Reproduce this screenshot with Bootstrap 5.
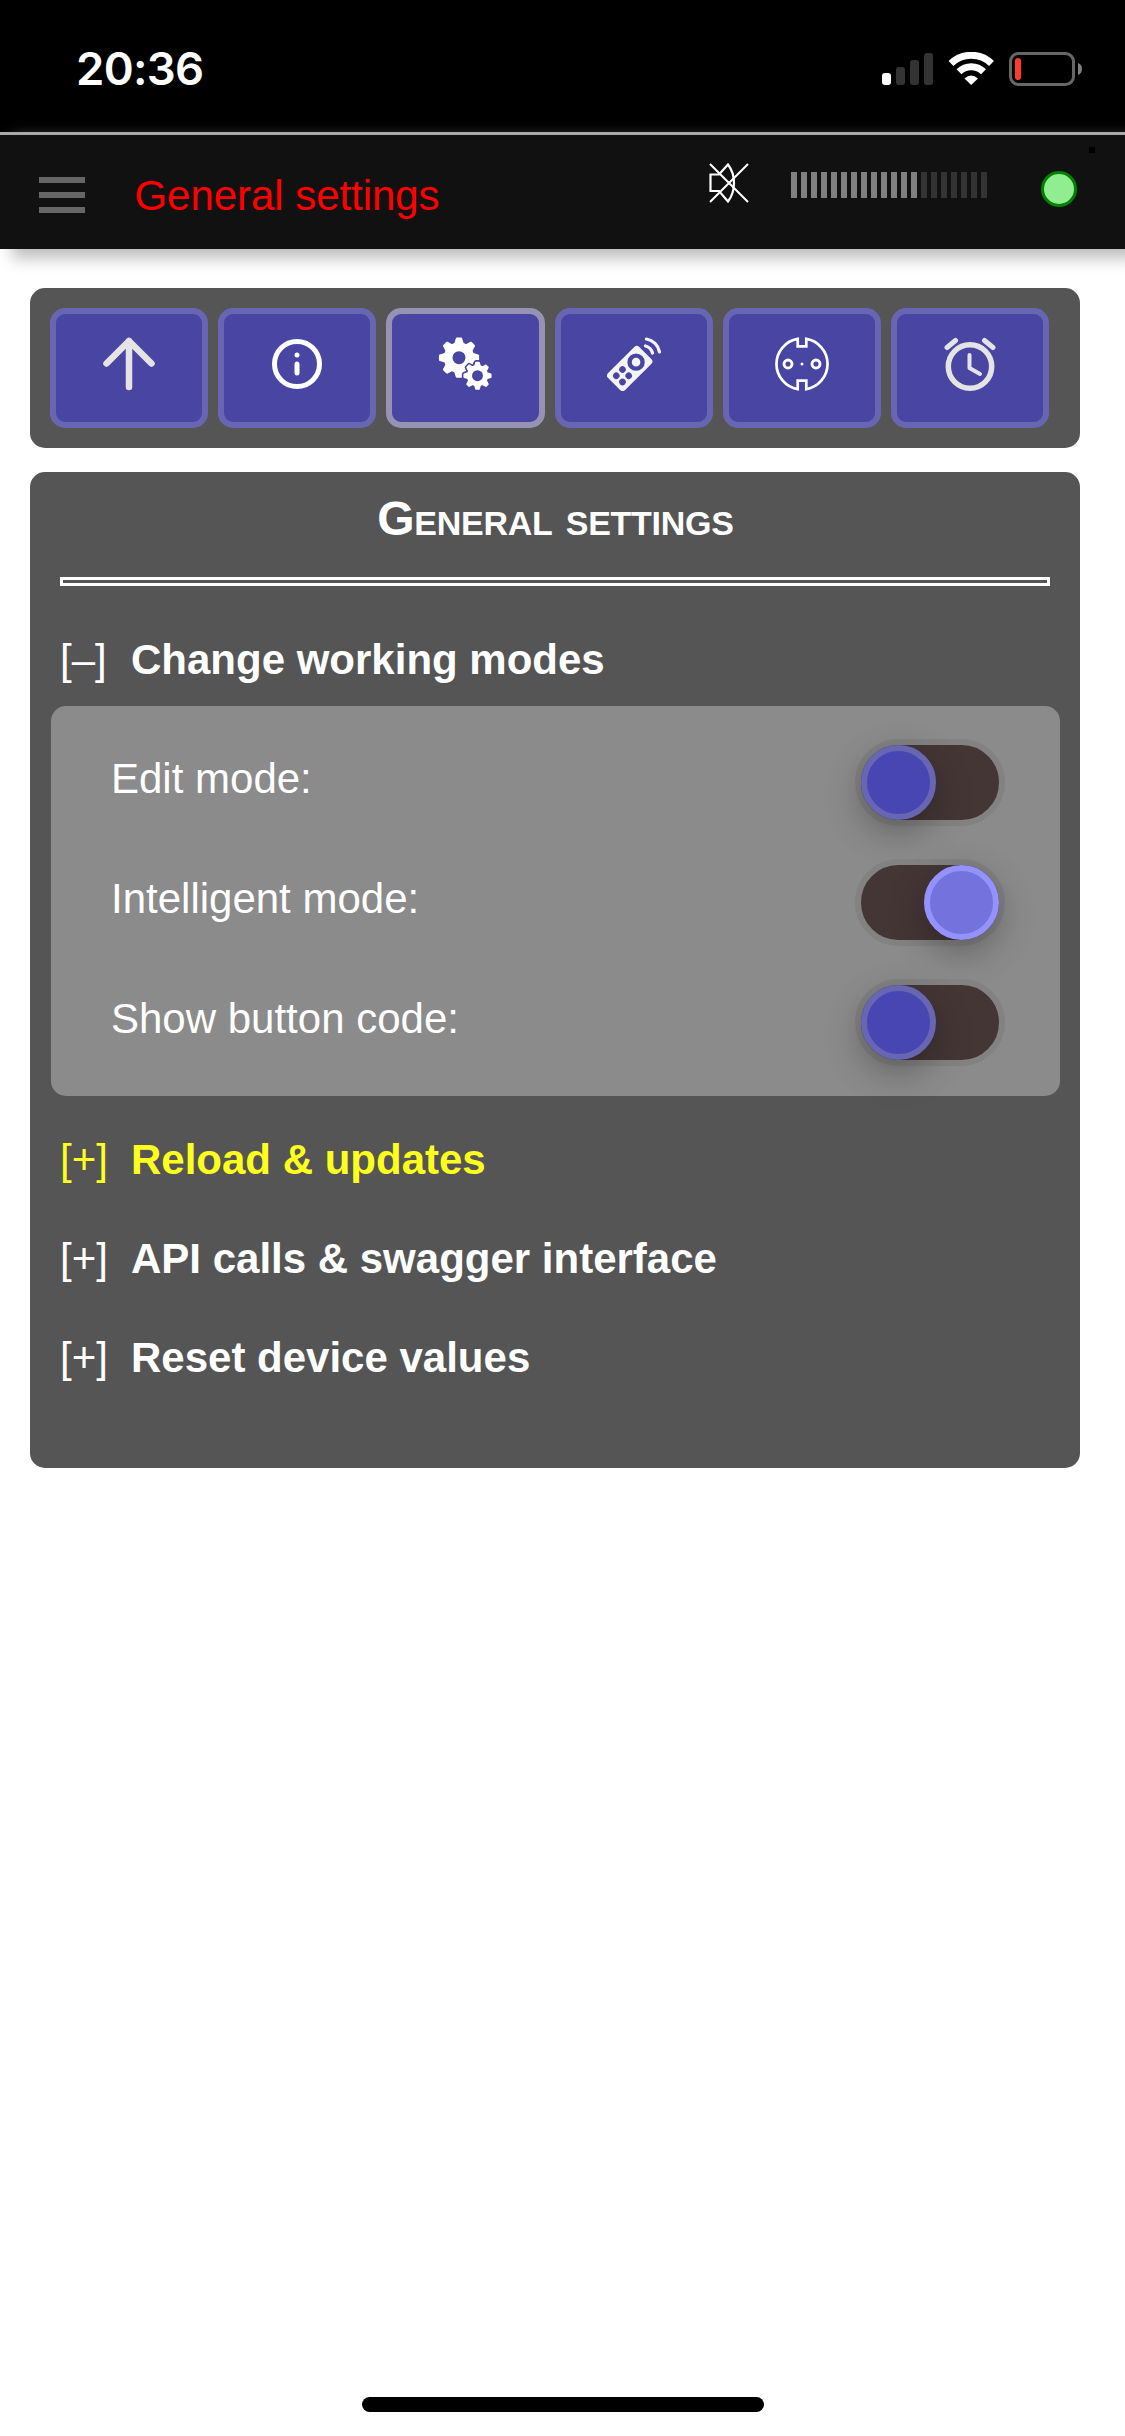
<!DOCTYPE html>
<html lang="en">
<head>
<meta charset="utf-8">
<meta name="viewport" content="width=device-width, initial-scale=1">
<title>General settings</title>
<link href="https://cdn.jsdelivr.net/npm/bootstrap@5.3.0/dist/css/bootstrap.min.css" rel="stylesheet">
<style>
body{width:1125px;height:2436px;font-family:"Liberation Sans",Arial,sans-serif;font-size:42px;line-height:48px;overflow:hidden}
svg{display:block;flex:none}
.status-bar{height:132px;padding:0 43px 0 76px}
.clock{font-family:Inter,sans-serif;font-weight:600;font-size:45.5px;letter-spacing:-.7px;line-height:56px;margin-top:6px}
.status-icons{margin-top:6px}
.app-bar{height:117px;background:#111;border-top:3px solid #a9a9a9;box-shadow:12px 9px 15px #bbb;padding:0 48px 0 38.500px}
.burger{width:46px;padding-top:6px;gap:9px}
.burger i{display:block;height:6px;background:#666}
.app-title{color:red;margin-left:50px;padding-top:7px;letter-spacing:-.05px}
.sound{margin-top:-18px}
.ticks{gap:4px;margin:3px 54px 0 42px}
.tick{width:6px;height:26px;background:#333}
.tick.lit{background:gray}
.led{width:36px;height:36px;border:3px solid green;background:#90ee90;margin-top:11px}
.led-dot{position:absolute;right:30px;top:12px;width:6px;height:6px;background:#000}
.panel{background:#555;border-radius:15px;margin-left:30px;width:1050px}
.tools{height:160px;padding:20px 31px 20px 20px;gap:10px;margin-top:39px}
.tool{background:#4846a2;border:6px solid #6866b2;border-radius:15px;padding:0 0 8px;flex:1 1 0;min-width:0}
.tool.active{background:#4846a2;border-color:#9592b2}
.main{height:996px;padding:0 20px 0 21px;margin-top:24px}
.heading{font-variant:small-caps;font-weight:700;font-size:48px;letter-spacing:-.25px;line-height:56px;margin:19px 0 0}
.rule{height:9px;border:3px solid #fff;margin:30px 10px 0 9px}
.fold{height:48px;margin:51px 0 0 9px}
.fold span{width:71px}
.fold.opened{margin-top:50px}
.fold.pending{margin-top:40px;color:#ffff1e}
.modes{background:#8b8b8b;border-radius:15px;height:390px;padding:16px 55px 14px 60px;margin-top:22px}
.mode{height:120px}
.mode label{padding-bottom:6px}
.switch{width:150px;height:87px;border:6px solid #828282;border-radius:44px;background:#453636}
.knob{width:75px;height:75px;border:6px solid #6866b2;background:#4846b2;border-radius:50%;box-shadow:0 12px 36px rgba(0,0,0,.3)}
.on .knob{background:#7473dd;border-color:#9492ff}
.home{width:402px;height:15px;border-radius:8px;background:#000;margin-bottom:24px}
</style>
</head>
<body class="d-flex flex-column bg-white m-0">
<div class="status-bar bg-black text-white d-flex align-items-center justify-content-between">
  <div class="clock">20:36</div>
  <div class="status-icons d-flex align-items-center">
    <svg width="200" height="34" viewBox="882 52 200 34">
      <rect x="882" y="73" width="9" height="12" rx="3" fill="#fff"/>
      <g fill="#333"><rect x="896" y="67" width="9" height="18" rx="3"/><rect x="910" y="60" width="9" height="25" rx="3"/><rect x="924" y="53" width="9" height="32" rx="3"/></g>
      <g fill="none" stroke="#fff" stroke-width="7"><path d="M951 63.500A29 29 0 0 1 991.500 63.500"/><path d="M959 71.700A17.500 17.500 0 0 1 983.500 71.700"/></g>
      <path d="M964.500 78.500Q971 72.500 978 78.500L971.200 85Z" fill="#fff"/>
      <rect x="1010.500" y="53.500" width="63" height="31" rx="8" fill="none" stroke="#666" stroke-width="3"/>
      <rect x="1015" y="58" width="6" height="22" rx="3" fill="#ff3b30"/>
      <path d="M1078 63q4 1.500 4 6t-4 6z" fill="#808080"/>
    </svg>
  </div>
</div>
<header class="app-bar d-flex align-items-center position-relative">
  <div class="burger d-flex flex-column"><i></i><i></i><i></i></div>
  <div class="app-title">General settings</div>
  <div class="sound d-flex align-items-center ms-auto">
    <svg width="40" height="40" viewBox="0 0 40 40" fill="none" stroke="#fff" stroke-width="2.200"><path d="M1.500 11.500H10L19 1.500C27 12 27 28 19 38.500L10 28H1.500Z"/><path d="M1 1L39 39M39 1L1 39" stroke-width="2"/></svg>
    <div class="ticks d-flex">
      <i class="tick lit"></i><i class="tick lit"></i><i class="tick lit"></i><i class="tick lit"></i><i class="tick lit"></i><i class="tick lit"></i><i class="tick lit"></i><i class="tick lit"></i><i class="tick lit"></i><i class="tick lit"></i><i class="tick lit"></i><i class="tick lit"></i><i class="tick lit"></i><i class="tick"></i><i class="tick"></i><i class="tick"></i><i class="tick"></i><i class="tick"></i><i class="tick"></i><i class="tick"></i>
    </div>
    <div class="led rounded-circle"></div>
  </div>
  <span class="led-dot"></span>
</header>
<nav class="panel tools d-flex">
  <button class="tool btn d-flex align-items-center justify-content-center" aria-label="Up"><svg width="54" height="54" viewBox="0 0 54 54" fill="none" stroke="#e4e4e4" stroke-width="6.500" stroke-linecap="round" stroke-linejoin="round"><path d="M27 50V4M4.500 26.500L27 4L49.500 26.500"/></svg></button>
  <button class="tool btn d-flex align-items-center justify-content-center" aria-label="Info"><svg width="54" height="54" viewBox="0 0 54 54" fill="none" stroke="#fff" stroke-width="5"><circle cx="27" cy="27" r="22.500"/><path d="M27 27V36" stroke-linecap="round"/><circle cx="27" cy="18" r="2.500" fill="#fff" stroke="none"/></svg></button>
  <button class="tool active btn d-flex align-items-center justify-content-center" aria-label="Settings"><svg width="54" height="54" viewBox="0 0 54 54"><defs><g id="gear"><circle r="15.200"/><g id="cog4"><g id="cog2"><path id="cog1" d="M-4.800-14L-3.200-19.300Q-3-20.100-2-20.100H2Q3-20.100 3.200-19.300L4.800-14Z"/><use href="#cog1" transform="rotate(180)"/></g><use href="#cog2" transform="rotate(90)"/></g><use href="#cog4" transform="rotate(45)"/></g></defs>
    <use href="#gear" fill="#fff" transform="translate(21 20.700)"/><circle cx="21" cy="20.700" r="6.500" fill="#4846a2"/>
    <g transform="translate(39.500 38.700) scale(.7)"><use href="#gear" fill="#4846a2" stroke="#4846a2" stroke-width="4.500"/><use href="#gear" fill="#fff"/><circle r="7.800" fill="#4846a2"/></g></svg></button>
  <button class="tool btn d-flex align-items-center justify-content-center" aria-label="Remote"><svg width="54" height="54" viewBox="0 0 54 54"><g transform="translate(22.700 31.500) rotate(45)"><rect x="-12" y="-22" width="24" height="44" rx="3.500" fill="#f4f4f4"/><g fill="#4846a2"><circle cy="-9" r="8.700"/><circle cx="-4.400" cy="5.800" r="3.300"/><circle cx="4.400" cy="5.800" r="3.300"/><circle cx="-4.400" cy="14.600" r="3.300"/><circle cx="4.400" cy="14.600" r="3.300"/></g><circle cy="-9" r="4.300" fill="#f4f4f4"/></g><g fill="none" stroke="#f4f4f4" stroke-width="3.200" stroke-linecap="round"><path d="M38.500 9A10 10 0 0 1 45.500 16M39.500 2A16 16 0 0 1 52.500 15"/></g></svg></button>
  <button class="tool btn d-flex align-items-center justify-content-center" aria-label="Socket"><svg width="54" height="54" viewBox="0 0 54 54" fill="none" stroke="#fff" stroke-width="2.700"><path d="M22.700 1.900V9.300H31.300V1.900A25.450 25.450 0 0 1 31.300 52.100V43.700H22.700V52.100A25.450 25.450 0 0 1 22.700 1.900Z"/><circle cx="13" cy="27" r="4" stroke-width="2.900"/><circle cx="41" cy="27" r="4" stroke-width="2.900"/><circle cx="27" cy="27" r="1.500" fill="#fff" stroke="none"/></svg></button>
  <button class="tool btn d-flex align-items-center justify-content-center" aria-label="Timer"><svg width="54" height="54" viewBox="0 0 54 54" fill="none" stroke="#e4e4e4" stroke-width="5" stroke-linecap="round" stroke-linejoin="round"><circle cx="27" cy="29.500" r="21.700" stroke-width="5.500"/><path d="M26.500 18V31L37 37" stroke-width="4"/><path d="M4 10.500L12.500 3.500M50 10.500L41.500 3.500"/></svg></button>
</nav>
<main class="panel main text-white">
  <h1 class="heading text-center">General settings</h1>
  <div class="rule"></div>
  <div class="fold opened d-flex"><span>[–]</span><b>Change working modes</b></div>
  <section class="modes">
    <div class="mode d-flex align-items-center justify-content-between"><label>Edit mode:</label><div class="switch d-flex"><div class="knob"></div></div></div>
    <div class="mode d-flex align-items-center justify-content-between"><label>Intelligent mode:</label><div class="switch on d-flex justify-content-end"><div class="knob"></div></div></div>
    <div class="mode d-flex align-items-center justify-content-between"><label>Show button code:</label><div class="switch d-flex"><div class="knob"></div></div></div>
  </section>
  <div class="fold pending d-flex"><span>[+]</span><b>Reload &amp; updates</b></div>
  <div class="fold d-flex"><span>[+]</span><b>API calls &amp; swagger interface</b></div>
  <div class="fold d-flex"><span>[+]</span><b>Reset device values</b></div>
</main>
<div class="home mt-auto mx-auto"></div>
<script src="https://cdn.jsdelivr.net/npm/bootstrap@5.3.0/dist/js/bootstrap.bundle.min.js"></script>
</body>
</html>
